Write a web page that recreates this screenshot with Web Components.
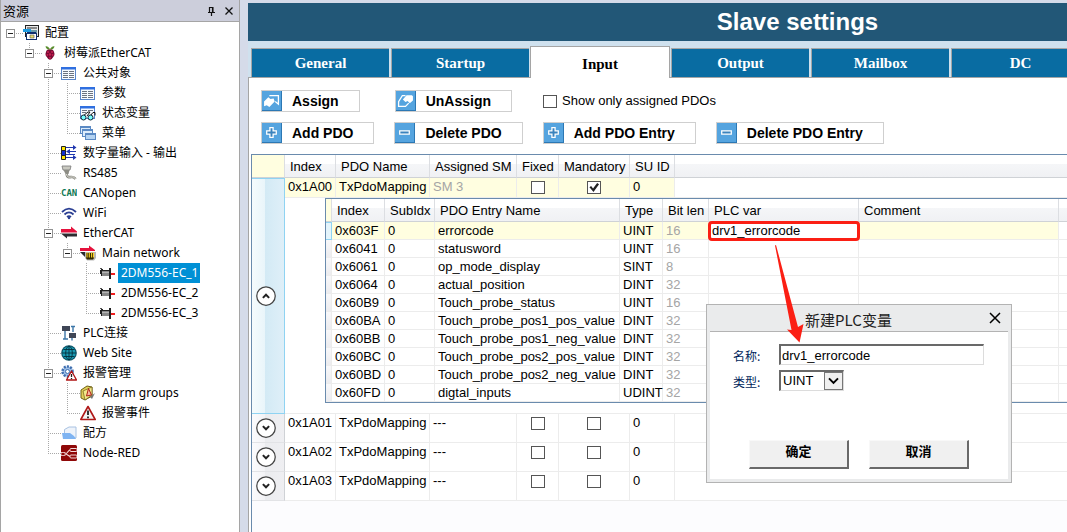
<!DOCTYPE html>
<html lang="zh-CN">
<head>
<meta charset="utf-8">
<title>Slave settings</title>
<style>
  html, body { margin: 0; height: 100%; }
  body { background: #d5dbe9; font: 13px/18px "Liberation Sans", "Noto Sans CJK SC", sans-serif; color: #000; overflow: hidden; }
</style>
</head>
<body>
<app-shell>
  <resource-panel slot="side" heading="资源">
    <tree-node root open last icon="config" label="配置">
      <tree-node open last icon="berry" label="树莓派EtherCAT">
        <tree-node open icon="table" label="公共对象">
          <tree-node icon="table" label="参数"></tree-node>
          <tree-node icon="watch" label="状态变量"></tree-node>
          <tree-node last icon="menus" label="菜单"></tree-node>
        </tree-node>
        <tree-node icon="io" label="数字量输入 - 输出"></tree-node>
        <tree-node icon="serial" label="RS485"></tree-node>
        <tree-node icon="can" label="CANopen"></tree-node>
        <tree-node icon="wifi" label="WiFi"></tree-node>
        <tree-node open icon="ethercat" label="EtherCAT">
          <tree-node open last icon="network" label="Main network">
            <tree-node selected icon="drive" label="2DM556-EC_1"></tree-node>
            <tree-node icon="drive" label="2DM556-EC_2"></tree-node>
            <tree-node last icon="drive" label="2DM556-EC_3"></tree-node>
          </tree-node>
        </tree-node>
        <tree-node icon="plc" label="PLC连接"></tree-node>
        <tree-node icon="web" label="Web Site"></tree-node>
        <tree-node open icon="alarmcfg" label="报警管理">
          <tree-node icon="alarmgroup" label="Alarm groups"></tree-node>
          <tree-node last icon="alarm" label="报警事件"></tree-node>
        </tree-node>
        <tree-node icon="folder" label="配方"></tree-node>
        <tree-node last icon="nodered" label="Node-RED"></tree-node>
      </tree-node>
    </tree-node>
  </resource-panel>
  <slave-settings slot="main">
    <tab-strip slot="tabs" tabs="General,Startup,Input,Output,Mailbox,DC" active="Input"></tab-strip>
    <pdo-toolbar></pdo-toolbar>
    <pdo-grid></pdo-grid>
  </slave-settings>
  <variable-dialog slot="over"></variable-dialog>
  <callout-arrow slot="over"></callout-arrow>
</app-shell>

<script>
const ICONS = {
  config: '<rect x="2.500" y=".5" width="13" height="11" fill="#e8e8e8" stroke="#222"/><rect x="4" y="2" width="10" height="2" fill="#8a8a8a"/><rect x="5" y="5" width="9" height="5" fill="#6d9ba8"/><path d="M0 4h8v3H0z" fill="#1e9be0"/><path d="M4 7h9v2H4z" fill="#10306e"/><rect x="3.500" y="8.500" width="10" height="6" fill="#fff" stroke="#10306e"/><path d="M7 10h4v3H7z" fill="#e8df70" stroke="#555" stroke-width=".6"/>',
  berry: '<path d="M8 4C6 1 4 1 3.500 1.500 4 4 6 5 8 4.500 10 5 12 4 12.500 1.500 12 1 10 1 8 4z" fill="#5a8f2e"/><path d="M8 4.500c2.500-.5 4 1 4 2.500 1 2 .4 4-.8 5-.9 1.700-2 2.500-3.200 2.800-1.200-.3-2.300-1.100-3.200-2.800C3.600 11 3 9 4 7c0-1.500 1.500-3 4-2.500z" fill="#7a0c34"/><g fill="#c81e52"><circle cx="6" cy="7" r="1"/><circle cx="10" cy="7" r="1"/><circle cx="8" cy="9.500" r="1.200"/><circle cx="5.300" cy="10" r=".9"/><circle cx="10.700" cy="10" r=".9"/><circle cx="8" cy="12.700" r="1"/></g>',
  table: '<rect x=".5" y="2.500" width="14" height="12" fill="#f8fbff" stroke="#5b86c9"/><path d="M0 2h15v2.500H0z" fill="#2f6fe0"/><path d="M2 6h5v1H2zM2 8h5v1H2zM2 10h5v1H2zM2 12h5v1H2zM8 6h5v1H8zM8 8h5v1H8zM8 10h5v1H8zM8 12h5v1H8z" fill="#6d7480"/>',
  watch: '<rect x=".5" y="1.500" width="14" height="12" fill="#f8fbff" stroke="#5b86c9"/><path d="M0 1h15v2.500H0z" fill="#2f6fe0"/><path d="M2 5h5v1H2zM2 7h4v1H2zM8 5h5v1H8z" fill="#6d7480"/><path d="M3 11l5-4h2l-3 4M10 11l3-3.500h2v3" fill="none" stroke="#111"/><circle cx="3.500" cy="12.500" r="2.500" fill="#7ff" stroke="#123"/><circle cx="10.500" cy="12.500" r="2.500" fill="#7ff" stroke="#123"/>',
  menus: '<g stroke="#5b8ac4" fill="#dcecfb"><rect x=".5" y="1.500" width="10" height="7"/><path d="M1 2.500h9"/><rect x="2.500" y="4.500" width="10" height="7"/><path d="M3 5.500h9"/><rect x="5.500" y="8.500" width="10" height="6" fill="#b4d3f2"/><path d="M6 9.500h9"/></g>',
  io: '<path d="M.5 1.500h4v4h-4zM.5 10.500h4v4h-4z" fill="#ffe600" stroke="#222"/><path d="M.5 5.500h4v5h-4z" fill="#1030d0" stroke="#222"/><path d="M5 2.500h9M7 6.500h8M5 9.500h9M5 12.500h9" stroke="#2038b0" fill="none"/><path d="M12 0l3.500 2.500L12 5zM12 10l3.500 2.500L12 15zM9 4L5 6.500 9 9z" fill="#2038b0"/>',
  serial: '<path d="M1 1h9l-1 4H2z" fill="#c9c9c0" stroke="#777" stroke-width=".8"/><path d="M2.500 5h6l-1 4h-3z" fill="#8d8d85"/><path d="M5.500 9c.5 3 2 3.500 4.500 3 2.500-.3 3.500.3 4.500 2" fill="none" stroke="#88887f" stroke-width="2.600"/><path d="M5.500 9c.5 3 2 3.500 4.500 3 2.500-.3 3.500.3 4.500 2" fill="none" stroke="#deded8"/>',
  can: '<text x="0" y="11" font-family="DejaVu Sans Mono, monospace" font-weight="bold" font-size="9" fill="#117a55">CAN</text>',
  wifi: '<g fill="none" stroke="#2b3f93" stroke-width="1.800"><path d="M1 7c4.500-4.300 9.500-4.300 14 0M3.500 9.500c3-2.800 6-2.800 9 0M6 12c1.300-1 2.700-1 4 0"/></g><circle cx="8" cy="13" r="1.200" fill="#2b3f93"/>',
  ethercat: '<path d="M0 4h10V1.500L16 6.500v1H0z" fill="#e5123d"/><path d="M16 8.500H0l6 5V11.500h10z" fill="#2c2c30"/>',
  network: '<path d="M0 3h9V.5L15 5v1H0z" fill="#e5123d"/><path d="M0 7h6v6z" fill="#2c2c30"/><path d="M5 7h11v6l-2 2.500H7L5 13z" fill="#b9b9b9"/><path d="M6 8h8v5l-1 1.500H7L6 13z" fill="#332b00"/><path d="M7 7.500v5M9.300 7.500v5M11.600 7.500v5M13.500 7.500v5" stroke="#ffd228" stroke-width="1.100"/>',
  drive: '<path d="M2 4h2v1h7v8H2V9H1V5h1z" fill="#222"/><path d="M3 6h8v5H3z" fill="#8a8a8a"/><path d="M3 7h8v1H3z" fill="#b5b5b5"/><path d="M1 3h2v1H1z" fill="#555"/><path d="M2 11h8v2H2z" fill="#fff"/><path d="M10 3h2v11h-2z" fill="#222"/><path d="M12 8h4v2h-4z" fill="#f02020"/>',
  plc: '<path d="M1 1h8v5H1zM8 8h7v5H8z" fill="#3f4656"/><path d="M4 6v8M2 14h5M12 1v6M10 1.500h4M11 13v2.500" stroke="#3c76a8" stroke-width="1.400" fill="none"/>',
  web: '<circle cx="8" cy="8" r="7.800" fill="#0b4f63"/><circle cx="8" cy="8" r="6.700" fill="#1a9ab2"/><g fill="none" stroke="#05303d" stroke-width=".9"><ellipse cx="8" cy="8" rx="3.300" ry="6.800"/><path d="M8 1v14M1 8h14M2.500 4.500h11M2.500 11.500h11"/></g>',
  alarmcfg: '<circle cx="6.500" cy="6.500" r="5" fill="#9fc0e8" stroke="#3f6fb0" stroke-width="2.500" stroke-dasharray="2 1.200"/><circle cx="6.500" cy="6.500" r="2" fill="#fff" stroke="#3f6fb0"/><path d="M10.500 6l5 9h-10z" fill="#fff" stroke="#b01515" stroke-width="1.300" stroke-linejoin="round"/><path d="M10.500 9v3M10.500 13v1.200" stroke="#222" stroke-width="1.300"/>',
  alarmgroup: '<path d="M1 5l6-4 5 1v9l-7 4-4-2z" fill="#e2cf5a" stroke="#6d6015"/><path d="M3 6l9-4v8l-7 5z" fill="#f3e88b" stroke="#6d6015" stroke-width=".7"/><path d="M8.500 3.500l3 6.500-5 1z" fill="#f6b8a0" stroke="#b02015"/><path d="M10 12l5-4-3 6z" fill="#777"/>',
  alarm: '<path d="M8 1.500l7.200 13H.8z" fill="#f4f4f4" stroke="#b01818" stroke-width="1.600" stroke-linejoin="round"/><path d="M8 5.500v4.500M8 11.500v1.800" stroke="#2a2a2a" stroke-width="1.900"/>',
  folder: '<path d="M3.500 4.500L8 2h7v11H3.500z" fill="#eef3fa" stroke="#a8c2e2"/><path d="M1 8h8l4 3 2 3H2z" fill="#7fb4f2"/>',
  nodered: '<rect width="16" height="16" rx="1.500" fill="#8f0808"/><path d="M0 9h4c3 0 2-4 6-4M4 9c3 0 3 2.500 6 2.500" fill="none" stroke="#f3d9d9" stroke-width="1.100"/><rect x="9" y="3.500" width="7" height="3" rx="1" fill="#8f0808" stroke="#f3d9d9"/><rect x="9" y="10" width="7" height="3" rx="1" fill="#8f0808" stroke="#f3d9d9"/><rect x="0" y="7.500" width="4" height="3" fill="#8f0808" stroke="#f3d9d9" stroke-width=".8"/>',
  pin: '<path d="M6.500 4v5M9.500 4v5M6 4.500h4M5 9.500h7M8.500 9v4" fill="none" stroke="#111" stroke-width="1.200"/><path d="M9 4h1.500v5H9z" fill="#111"/>',
  cross: '<path d="M4.500 4.500l7 7M11.500 4.500l-7 7" stroke="#111" stroke-width="1.300" fill="none"/>',
  bigcross: '<path d="M3 3l10 10M13 3L3 13" stroke="#000" stroke-width="1.500" fill="none"/>',
  assign: '<path d="M6 3.500h8.500v8l-3-2.500" fill="none" stroke="#fff" stroke-width="1.200"/><path d="M1 9l4-4 2 1.500 3-.5 1 3-5 5-2.500-1.500-2.500 1z" fill="#fff"/>',
  unassign: '<path d="M8 3.500H5l-3.500 5.500v4.500H8l3-3" fill="none" stroke="#fff" stroke-width="1.200"/><path d="M5.500 7L9 3h5l1 1v4l-3 2.500-2-2-2 1z" fill="#fff"/>',
  plus: '<path d="M6.500 3.500h3v3h3v3h-3v3h-3v-3h-3v-3h3z" fill="#3b83bd" stroke="#fff" stroke-width="1.200"/>',
  minus: '<path d="M3.500 6.500h9v3h-9z" fill="#3b83bd" stroke="#fff" stroke-width="1.200"/>',
  up: '<circle cx="8" cy="8" r="7.400" fill="#fff" stroke="#444" stroke-width="1"/><path d="M5.500 9.500L8 7l2.500 2.500" fill="none" stroke="#222" stroke-width="1.600"/>',
  down: '<circle cx="8" cy="8" r="7.400" fill="#fff" stroke="#444" stroke-width="1"/><path d="M5.500 6.500L8 9l2.500-2.500" fill="none" stroke="#222" stroke-width="1.600"/>',
  chevron: '<path d="M2 4.500L8 10.500l6-6" fill="none" stroke="#000" stroke-width="2.600"/>'
};

/* Base class: renders a string template into an open shadow root. */
class Base extends HTMLElement {
  constructor() { super(); this.attachShadow({ mode: 'open' }); }
  connectedCallback() {
    const t = document.createElement('template');
    t.innerHTML = this.view();
    this.shadowRoot.replaceChildren(t.content.cloneNode(true));
  }
}

const CHECK = `
  input[type=checkbox] { appearance: none; box-sizing: border-box; width: 14px; height: 13px; margin: 0; border: 1px solid #555; background: #fff; flex: none; display: inline-grid; vertical-align: top; }
  input[type=checkbox]:checked::before { content: ""; background: #222; clip-path: polygon(12% 48%, 26% 36%, 42% 58%, 76% 8%, 92% 20%, 46% 92%); }`;

customElements.define('ui-icon', class extends Base {
  view() {
    return `<style>:host{display:block;width:16px;height:16px;flex:none}svg{display:block;width:100%;height:100%}</style>
      <svg viewBox="0 0 16 16" aria-hidden="true">${ICONS[this.getAttribute('name')]}</svg>`;
  }
});

customElements.define('app-shell', class extends Base {
  view() {
    return `<style>
      :host { display: grid; grid-template-columns: 240px minmax(0, 1fr); column-gap: 8px; min-height: 100vh; position: relative; overflow: hidden; }
      ::slotted(*) { min-width: 0; }
    </style>
    <slot name="side"></slot><slot name="main"></slot><slot name="over"></slot>`;
  }
});

customElements.define('resource-panel', class extends Base {
  view() {
    return `<style>
      :host { display: flex; flex-direction: column; box-sizing: border-box; border: solid #a5a5a5; border-width: 0 1px; background: #fff; }
      header { display: flex; align-items: center; gap: 2px; height: 22px; box-sizing: border-box; padding: 0 2px; background: #cccedb; border-bottom: 1px solid #a5a5a5; font: 13px/20px "Noto Sans CJK SC", sans-serif; }
      h2 { flex: 1; margin: 0; font: inherit; }
      button { border: 0; padding: 0; background: none; }
      nav { flex: 1; padding-top: 1px; font: 12px/20px "Noto Sans", "Noto Sans CJK SC", sans-serif; }
    </style>
    <header><h2>${this.getAttribute('heading')}</h2>
      <button aria-label="Pin"><ui-icon name="pin"></ui-icon></button>
      <button aria-label="Close"><ui-icon name="cross"></ui-icon></button></header>
    <nav role="tree"><slot></slot></nav>`;
  }
});

customElements.define('tree-node', class extends Base {
  view() {
    const open = this.hasAttribute('open');
    this.setAttribute('role', 'treeitem');
    return `<style>
      :host { display: block; background: repeating-linear-gradient(#a8a8a8 0 1px, transparent 1px 2px) 9px 0 / 1px 100% no-repeat; }
      :host([last]) { background-size: 1px 10px; }
      :host([root]) { background: none; }
      .row { display: flex; align-items: center; height: 20px; }
      .gutter { width: 22px; height: 20px; flex: none; display: flex; align-items: center; box-sizing: border-box; padding-left: 5px;
        background: repeating-linear-gradient(90deg, #a8a8a8 0 1px, transparent 1px 2px) 9px 10px / 13px 1px no-repeat; }
      .box { width: 9px; height: 9px; padding: 0; box-sizing: border-box; border: 1px solid #919191;
        background: linear-gradient(#222, #222) center / 5px 1px no-repeat #fff; }
      .label { margin-left: 3px; padding: 0 2px 0 3px; white-space: nowrap; }
      :host([selected]) > .row .label { background: #0090d5; color: #fff; }
      .children { padding-left: 19px; }
    </style>
    <div class="row"><span class="gutter">${open ? '<button class="box" aria-label="Collapse"></button>' : ''}</span>
      <ui-icon name="${this.getAttribute('icon')}"></ui-icon><span class="label">${this.getAttribute('label')}</span></div>
    <div class="children" role="group"><slot></slot></div>`;
  }
});

customElements.define('slave-settings', class extends Base {
  view() {
    return `<style>
      :host { display: flex; flex-direction: column; padding-top: 3px; }
      h1 { margin: 0; height: 38px; padding-left: 280px; background: #225777; color: #fff; text-align: center; font: bold 24px/37px "Liberation Sans", sans-serif; white-space: nowrap; }
      .page { flex: 1; display: flex; flex-direction: column; background: #fff; border: solid #a5a5a5; border-width: 1px 0 0 1px; padding: 12px 0 0 2px; }
    </style>
    <h1>Slave settings</h1><slot name="tabs"></slot>
    <div class="page"><slot></slot></div>`;
  }
});

customElements.define('tab-strip', class extends Base {
  view() {
    const active = this.getAttribute('active');
    return `<style>
      :host { display: flex; align-items: flex-end; gap: 2px; height: 36px; padding: 0 0 1px 3px; margin-bottom: -1px; background: linear-gradient(#cfe1ee, #cfe1ee) 0 0 / 100% 36px no-repeat; position: relative; overflow: hidden; }
      button { flex: none; width: 138px; height: 29px; box-sizing: border-box; margin: 0; padding: 0; border: solid #a5a5a5; border-width: 1px 0 0 1px; background: #096ca2; color: #fff; font: bold 15px/28px "Liberation Serif", serif; }
      button[aria-selected=true] { width: 140px; height: 32px; margin: 0 -1px -1px; padding-top: 2px; border-right-width: 1px; background: #fff; color: #000; }
    </style>` + this.getAttribute('tabs').split(',').map(t =>
      `<button role="tab" aria-selected="${t === active}">${t}</button>`).join('');
  }
});

customElements.define('tool-button', class extends Base {
  view() {
    return `<style>
      :host { display: block; flex: none; }
      button { display: flex; align-items: center; gap: 10px; height: 22px; box-sizing: border-box; padding: 0 20px 0 0; border: 1px solid #cfcfcf; background: #fff; color: #000; font: bold 14px/20px "Liberation Sans", sans-serif; white-space: nowrap; }
      .ic { box-sizing: border-box; width: 20px; height: 20px; padding: 1px; background: #55a4df; border: solid #2c78b4; border-width: 0 1px 1px 0; }
      ui-icon { width: 17px; height: 17px; }
    </style>
    <button><span class="ic"><ui-icon name="${this.getAttribute('icon')}"></ui-icon></span><slot></slot></button>`;
  }
});

customElements.define('pdo-toolbar', class extends Base {
  view() {
    return `<style>
      :host { display: flex; flex-direction: column; gap: 10px; padding: 0 0 10px 10px; }
      .row { display: flex; align-items: center; gap: 20px; }
      .row.wide { gap: 31px; }
      label { display: flex; align-items: center; gap: 5px; white-space: nowrap; }
      .wide tool-button:first-child { margin-right: 4px; }
      ${CHECK}
    </style>
    <div class="row wide"><tool-button icon="assign">Assign</tool-button><tool-button icon="unassign">UnAssign</tool-button>
      <label><input type="checkbox">Show only assigned PDOs</label></div>
    <div class="row"><tool-button icon="plus">Add PDO</tool-button><tool-button icon="minus">Delete PDO</tool-button>
      <tool-button icon="plus">Add PDO Entry</tool-button><tool-button icon="minus">Delete PDO Entry</tool-button></div>`;
  }
});

const GRID = `
  table { width: 100%; table-layout: fixed; border-collapse: separate; border-spacing: 0; background: #fff; }
  th, td { box-sizing: border-box; padding: 0 0 0 3px; border: solid #ececec; border-width: 0 1px 1px 0; text-align: left; vertical-align: top; font-weight: normal; white-space: nowrap; }
  thead th { height: 23px; padding: 2px 0 0 5px; line-height: 20px; border-color: #dcdee2; border-bottom-color: #cfd2d6; background: linear-gradient(#fff 0 40%, #f5f6f8 40%, #f0f1f4); }
  th:last-child, td:last-child { border-right: 0; }
  thead th.corner { background: #fffee0; }
  .dim { color: #a5a5a5; }
  tr.current td { background: #fffee0; }`;

customElements.define('pdo-entries', class extends Base {
  view() {
    const rows = [['0x603F','errorcode','UINT',16,'drv1_errorcode'],['0x6041','statusword','UINT',16],['0x6061','op_mode_display','SINT',8],
      ['0x6064','actual_position','DINT',32],['0x60B9','Touch_probe_status','UINT',16],['0x60BA','Touch_probe_pos1_pos_value','DINT',32],
      ['0x60BB','Touch_probe_pos1_neg_value','DINT',32],['0x60BC','Touch_probe_pos2_pos_value','DINT',32],
      ['0x60BD','Touch_probe_pos2_neg_value','DINT',32],['0x60FD','digtal_inputs','UDINT',32]];
    return `<style>
      :host { display: block; border: solid #6a8bad; border-width: 1px 0 1px 1px; }
      ${GRID}
      td, tbody th { height: 18px; line-height: 17px; }
      tbody th { background: linear-gradient(#f8f8fa, #ececef); }
      tr.current th { background: #e4f4fb; border: 1px solid #8fd3f2; border-left: 0; }
      tr.current td:last-child { background: #fff; }
      tr.current td.marked { background: #fff; outline: 3px solid #fb1f14; outline-offset: -2px; border-radius: 3px; }
    </style>
    <table aria-label="PDO entries">
      <colgroup><col style="width:6px"><col style="width:53px"><col style="width:50px"><col style="width:185px"><col style="width:43px"><col style="width:46px"><col style="width:150px"><col style="width:200px"><col></colgroup>
      <thead><tr><th class="corner"></th><th>Index</th><th>SubIdx</th><th>PDO Entry Name</th><th>Type</th><th>Bit len</th><th>PLC var</th><th>Comment</th><th></th></tr></thead>
      <tbody>${rows.map((r, i) => `<tr class="${i ? '' : 'current'}"><th></th><td>${r[0]}</td><td>0</td><td>${r[1]}</td><td>${r[2]}</td><td class="dim">${r[3]}</td><td class="${r[4] ? 'marked' : ''}">${r[4] || ''}</td><td></td><td></td></tr>`).join('')}</tbody>
    </table>`;
  }
});

customElements.define('pdo-grid', class extends Base {
  view() {
    const box = (n, on) => `<td class="mid"><input type="checkbox" aria-label="${n}"${on ? ' checked' : ''}></td>`;
    return `<style>
      :host { display: block; flex: 1; border: solid #6a8bad; border-width: 1px 0 0 1px; background: #fcfcfe; }
      ${GRID}
      ${CHECK}
      td { height: 29px; line-height: 18px; }
      tr.current td { height: 20px; }
      td.mid { text-align: center; padding: 3px 0 0; line-height: 13px; }
      tbody td:last-child, tr.current td:last-child { background: #fff; }
      tbody th { padding: 0 4px 0 0; vertical-align: middle; border-color: #cfd2d6 #cfd2d6 #e2e3e6; background: linear-gradient(90deg, #fbfbfd, #f3f3f6 40%, #ebecef 41%, #efeff2); }
      tr.current th { border: 1px solid #8fd3f2; border-left: 0; background: linear-gradient(90deg, #f5fbfd, #e9f5fa 40%, #d3eaf5 41%, #dfeff8); }
      th button { display: block; margin: 0 auto; padding: 0; border: 0; background: none; }
      th ui-icon { width: 20px; height: 20px; }
      td.detail { height: auto; padding: 0 0 10px 40px; }
    </style>
    <table aria-label="PDOs">
      <colgroup><col style="width:33px"><col style="width:51px"><col style="width:94px"><col style="width:87px"><col style="width:42px"><col style="width:71px"><col style="width:45px"><col></colgroup>
      <thead><tr><th class="corner"></th><th>Index</th><th>PDO Name</th><th>Assigned SM</th><th>Fixed</th><th>Mandatory</th><th>SU ID</th><th></th></tr></thead>
      <tbody>
        <tr class="current"><th rowspan="2"><button aria-label="Collapse"><ui-icon name="up"></ui-icon></button></th>
          <td>0x1A00</td><td>TxPdoMapping</td><td class="dim">SM 3</td>${box('Fixed')}${box('Mandatory', true)}<td>0</td><td></td></tr>
        <tr><td class="detail" colspan="7"><pdo-entries></pdo-entries></td></tr>
        ${['0x1A01','0x1A02','0x1A03'].map(x => `<tr><th><button aria-label="Expand"><ui-icon name="down"></ui-icon></button></th>
          <td>${x}</td><td>TxPdoMapping</td><td>---</td>${box('Fixed')}${box('Mandatory')}<td>0</td><td></td></tr>`).join('')}
      </tbody>
    </table>`;
  }
});

customElements.define('variable-dialog', class extends Base {
  view() {
    this.setAttribute('role', 'dialog');
    return `<style>
      :host { position: absolute; left: 706px; top: 304px; width: 306px; box-sizing: border-box; border: 1px solid #b3b3b3; background: #eaebec; padding: 0 3px 3px; font: 13px/18px "Liberation Sans", "Noto Sans CJK SC", sans-serif; }
      header { display: flex; align-items: center; height: 26px; }
      h2 { flex: 1; margin: 0; padding-top: 4px; text-align: center; font: 15px/22px "Noto Sans CJK SC", sans-serif; color: #222; }
      header button { border: 0; padding: 0; margin-right: 5px; background: none; }
      form { border-top: 1px solid #b3b3b3; background: #fff; padding: 12px 24px 10px 23px; }
      .field { display: grid; grid-template-columns: 46px 1fr; align-items: center; margin-bottom: 5px; }
      label { color: #001f5b; font: 12px/18px "Noto Sans CJK SC", sans-serif; padding-top: 3px; }
      input, .pick { box-sizing: border-box; height: 21px; border: solid; border-width: 2px 1px 1px 2px; border-color: #696969 #dcdcdc #dcdcdc #696969; background: #fff; }
      input { width: 100%; padding: 0 1px; font: inherit; border-radius: 0; }
      .pick { display: grid; width: 65px; }
      .pick > * { grid-area: 1 / 1; }
      select { appearance: none; border: 0; padding: 0 2px; margin: 0; font: inherit; background: none; color: #000; }
      .pick ui-icon { justify-self: end; box-sizing: border-box; width: 19px; height: 18px; padding: 2px; border: 1px solid #777; background: #f0f0f0; pointer-events: none; }
      .actions { display: flex; gap: 20px; padding: 44px 0 0 16px; }
      .actions button { width: 100px; height: 29px; box-sizing: border-box; padding: 0 0 6px; border: solid; border-width: 1px 2px 2px 1px; border-color: #f8f8f8 #696969 #696969 #f8f8f8; border-radius: 0; background: #f0f0f0; font: bold 13px/18px "Noto Sans CJK SC", sans-serif; color: #000; }
    </style>
    <header><h2>新建PLC变量</h2><button aria-label="Close"><ui-icon name="bigcross"></ui-icon></button></header>
    <form>
      <div class="field"><label for="n">名称:</label><input id="n" type="text" value="drv1_errorcode"></div>
      <div class="field"><label for="t">类型:</label><span class="pick"><select id="t"><option>UINT</option></select><ui-icon name="chevron"></ui-icon></span></div>
      <div class="actions"><button type="button">确定</button><button type="button">取消</button></div>
    </form>`;
  }
});

customElements.define('callout-arrow', class extends Base {
  view() {
    return `<style>
      :host { position: absolute; left: 772px; top: 244px; width: 32px; height: 100px; pointer-events: none; }
      svg { display: block; width: 100%; height: 100%; }
    </style>
    <svg viewBox="0 0 32 100" aria-hidden="true"><path d="M3 1.500L4 1l22 82 5.500-3L27.500 98.500 15 85.500l4.500.5z" fill="#fb1f14"/></svg>`;
  }
});
</script>
</body>
</html>
